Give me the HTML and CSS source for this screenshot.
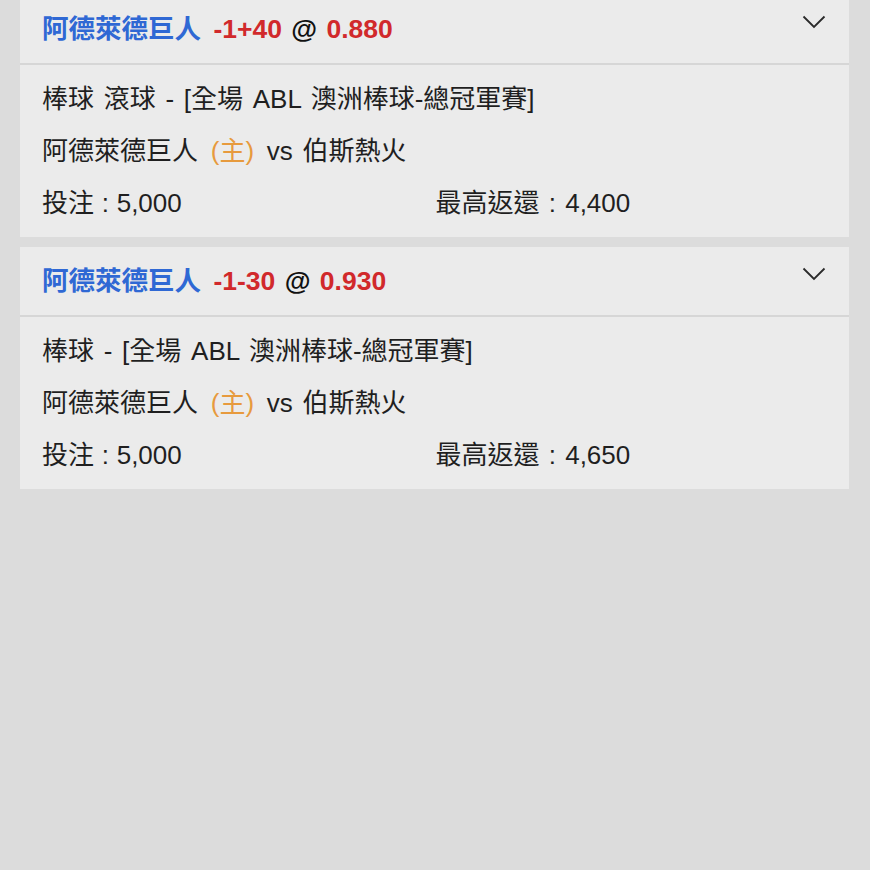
FILE: index.html
```html
<!DOCTYPE html>
<html lang="zh-Hant">
<head>
    <meta charset="UTF-8">
    <meta name="viewport" content="width=device-width, initial-scale=1.0">
    <title>注單</title>
    <link rel="stylesheet" href="styles.css">
</head>
<body>
    <div class="bet-list">
        <div class="bet-card">
            <div class="bet-header">
                <div class="bet-title">
                    <span class="team">阿德萊德巨人</span>
                    <span class="odds">-1+40</span>
                    <span class="at">@</span>
                    <span class="price">0.880</span>
                </div>
                <svg class="chevron" width="24" height="14" viewBox="0 0 24 14">
                    <path d="M1.5 1.5 L12 12 L22.5 1.5" fill="none" stroke="#2a2a2a" stroke-width="1.8"/>
                </svg>
            </div>
            <div class="bet-body">
                <div class="line">棒球 滾球 - [全場 ABL 澳洲棒球-總冠軍賽]</div>
                <div class="line">阿德萊德巨人 <span class="home">(主)</span> vs 伯斯熱火</div>
                <div class="line amounts">
                    <span>投注 : 5,000</span>
                    <span>最高返還 : 4,400</span>
                </div>
            </div>
        </div>

        <div class="bet-card">
            <div class="bet-header">
                <div class="bet-title">
                    <span class="team">阿德萊德巨人</span>
                    <span class="odds">-1-30</span>
                    <span class="at">@</span>
                    <span class="price">0.930</span>
                </div>
                <svg class="chevron" width="24" height="14" viewBox="0 0 24 14">
                    <path d="M1.5 1.5 L12 12 L22.5 1.5" fill="none" stroke="#2a2a2a" stroke-width="1.8"/>
                </svg>
            </div>
            <div class="bet-body">
                <div class="line">棒球 - [全場 ABL 澳洲棒球-總冠軍賽]</div>
                <div class="line">阿德萊德巨人 <span class="home">(主)</span> vs 伯斯熱火</div>
                <div class="line amounts">
                    <span>投注 : 5,000</span>
                    <span>最高返還 : 4,650</span>
                </div>
            </div>
        </div>
    </div>
</body>
</html>
```
FILE: styles.css
```css
body {
    font-family: "Liberation Sans", "Noto Sans CJK TC", sans-serif;
    background-color: #dcdcdc;
    margin: 0;
    padding: 0;
    height: 870px;
    overflow: hidden;
}

.bet-list {
    display: flex;
    flex-direction: column;
    gap: 10px;
    margin: -5px 21px 0 20px;
}

.bet-card {
    background-color: #ebebeb;
}

.bet-header {
    display: flex;
    justify-content: space-between;
    align-items: flex-start;
    height: 68px;
    padding: 0 23px 0 22px;
    border-bottom: 2px solid #d6d6d6;
}

.bet-title {
    font-size: 26.5px;
    font-weight: bold;
    line-height: 68px;
    color: #222;
}

.team {
    color: #2f68d4;
}

.odds {
    color: #d1292b;
    margin-left: 5px;
}

.price {
    color: #d1292b;
}

.at {
    color: #111;
    margin: 0 2px;
}

.chevron {
    margin-top: 20px;
}

.bet-body {
    padding: 8px 22px;
    font-size: 26px;
    color: #1f1f1f;
    word-spacing: 2.5px;
}

.line {
    line-height: 52px;
    white-space: nowrap;
}

.home {
    color: #e79a3d;
    margin: 0 3px;
}

.amounts {
    display: grid;
    grid-template-columns: 1fr 1fr;
    word-spacing: 0.5px;
}

.amounts span + span {
    padding-left: 1px;
    word-spacing: 2px;
}
```
